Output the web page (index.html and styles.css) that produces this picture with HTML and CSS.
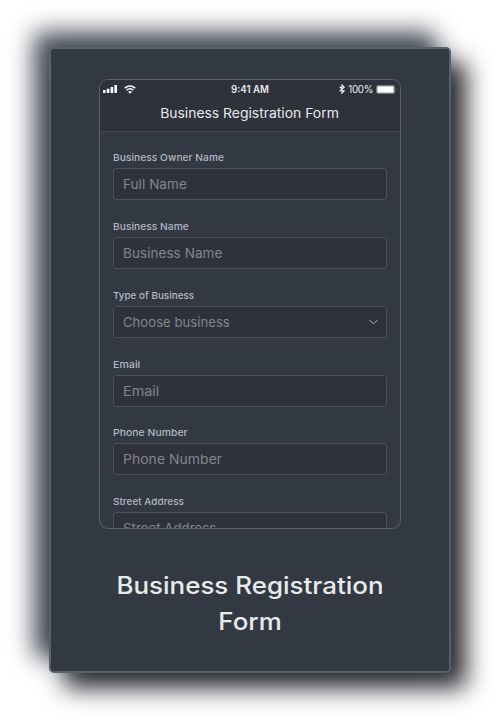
FILE: index.html
```html
<!DOCTYPE html>
<html lang="en">
<head>
<meta charset="utf-8">
<title>Business Registration Form</title>
<link rel="stylesheet" href="styles.css">
</head>
<body>
<article class="card">
  <section class="phone">
    <header class="header">
      <div class="status">
        <div class="signals">
          <svg class="bars" viewBox="0 0 14 8"><path d="M0 5h2.6v3H0zM3.8 3.7h2.6V8H3.8zM7.6 2h2.6v6H7.6zM11.4 0H14v8h-2.6z"/></svg>
          <svg class="wifi" viewBox="0 0 12 9"><path d="M.8 3.2Q6-1 11.2 3.2M2.7 5.2Q6 2.5 9.3 5.2"/><path class="solid" d="M4.1 6.8Q6 5.2 7.9 6.8L6 8.7z"/></svg>
        </div>
        <span class="time">9:41 AM</span>
        <div class="power">
          <svg class="bluetooth" viewBox="0 0 6 10"><path d="M.6 2.8l4.6 4L3 9V1l2.2 2.2-4.6 4"/></svg>
          <span class="percent">100%</span>
          <svg class="battery" viewBox="0 0 21 9"><rect class="shell" x=".5" y=".5" width="18" height="8" rx="1.5"/><rect class="charge" x="1.3" y="1.3" width="16.4" height="6.4" rx=".5"/><path class="cap" d="M19.8 3q1.4 1.5 0 3z"/></svg>
        </div>
      </div>
      <div class="title"><span>Business Registration Form</span></div>
    </header>
    <form class="form">
      <div class="field"><span class="label">Business Owner Name</span><div class="input"><span>Full Name</span></div></div>
      <div class="field"><span class="label">Business Name</span><div class="input"><span>Business Name</span></div></div>
      <div class="field select"><span class="label">Type of Business</span><div class="input"><span>Choose business</span><svg class="chevron" viewBox="0 0 9 6"><path d="M.5 1l4 3.8 4-3.8"/></svg></div></div>
      <div class="field email"><span class="label">Email</span><div class="input"><span>Email</span></div></div>
      <div class="field number"><span class="label">Phone Number</span><div class="input"><span>Phone Number</span></div></div>
      <div class="field address"><span class="label">Street Address</span><div class="input"><span>Street Address</span></div></div>
    </form>
  </section>
  <h1 class="caption">Business Registration Form</h1>
</article>
</body>
</html>
```
FILE: styles.css
```css
* { box-sizing: border-box; }
body {
  margin: 0;
  height: 720px;
  padding: 47px 49px;
  background: #fff;
  font-family: Inter, "Liberation Sans", sans-serif;
  overflow: hidden;
}
.card {
  width: 402px;
  height: 626px;
  padding: 30px 48px;
  background: #333943;
  border: 2px solid #566270;
  border-radius: 5px;
  box-shadow: 15px 15px 25px #25282e, -15px -15px 25px #434955;
}
.phone {
  width: 302px;
  height: 450px;
  border: 1px solid #566270;
  border-radius: 9px;
  overflow: hidden;
}
.header {
  height: 52px;
  background: #2f323b;
  border-bottom: 1px solid #40444f;
  color: #e8e9ec;
}
.status {
  display: grid;
  grid-template-columns: 1fr auto 1fr;
  align-items: center;
  height: 18px;
  padding: 0 3px;
}
.signals { display: flex; gap: 7px; align-items: center; }
.power { display: flex; justify-content: flex-end; align-items: center; gap: 3px; }
svg { display: block; fill: none; flex: none; }
.bars { width: 14px; height: 8px; fill: #fff; }
.wifi { width: 12px; height: 9px; stroke: #fff; stroke-width: 1.5; }
.wifi .solid { fill: #fff; stroke: none; }
.bluetooth { width: 6px; height: 10px; stroke: #eee; stroke-width: 1.2; }
.battery { width: 21px; height: 9px; }
.shell { stroke: #777a81; }
.charge { fill: #fff; }
.cap { fill: #777a81; }
.time { font-size: 9.7px; font-weight: 600; }
.percent { font-size: 9.8px; letter-spacing: -0.3px; }
.title {
  display: flex;
  justify-content: center;
  font-size: 13px;
  line-height: 30px;
}
.title span { transform: scaleX(1.07); }
.form { padding: 19.3px 13px 0; }
.field { height: 68.8px; }
.label {
  display: block;
  height: 17px;
  font-size: 9.6px;
  line-height: 13px;
  font-weight: 500;
  letter-spacing: 0.05px;
  transform: scaleX(1.06);
  transform-origin: left;
  color: #b4b8c2;
}
.input {
  display: flex;
  align-items: center;
  justify-content: space-between;
  height: 32px;
  padding: 0 8px 0 9px;
  background: #2f323b;
  border: 1px solid #4b505c;
  border-radius: 3px;
  color: #82868f;
  font-size: 13px;
  letter-spacing: 0.05px;
}
.input span { transform: scaleX(1.04); transform-origin: left; }
.select .label { transform: scaleX(1.02); }
.select .input span { transform: scaleX(1.005); }
.email .label, .email .input span { transform: scaleX(1.1); }
.number .label { transform: scaleX(1.08); }
.number .input span { transform: scaleX(1.07); }
.address .label { transform: scaleX(1.03); }
.address .input span { transform: scaleX(1.015); }
.chevron { width: 9px; height: 6px; stroke: #858995; stroke-width: 1.1; }
.caption {
  margin: 39px 0 0;
  color: #e9eaec;
  font-size: 24px;
  font-weight: 500;
  line-height: 36px;
  text-align: center;
  transform: scaleX(1.08);
}
```
